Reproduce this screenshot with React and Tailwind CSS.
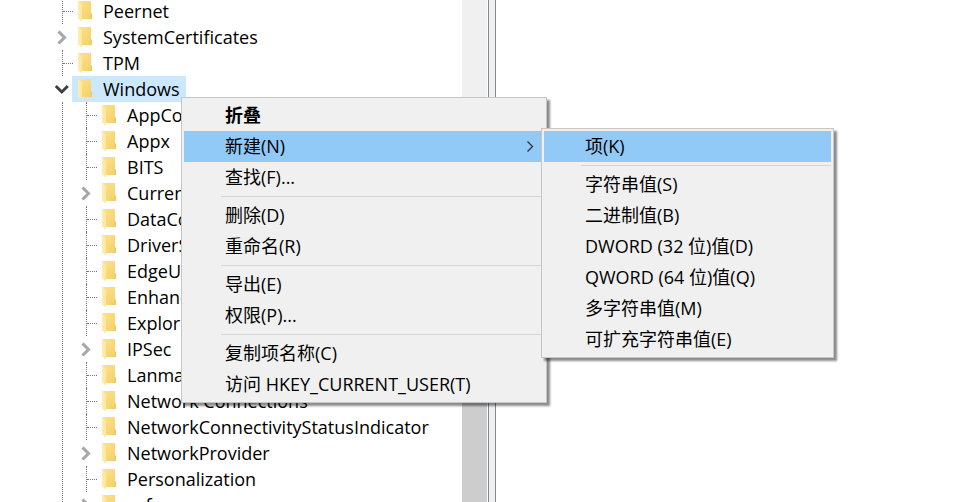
const roots = [
  { name: "Peernet" },
  { name: "SystemCertificates", expandable: true },
  { name: "TPM" },
  {
    name: "Windows",
    expandable: true,
    open: true,
    selected: true,
    children: [
      { name: "AppCompat" },
      { name: "Appx" },
      { name: "BITS" },
      { name: "CurrentVersion", expandable: true },
      { name: "DataCollection" },
      { name: "DriverSearching" },
      { name: "EdgeUI" },
      { name: "EnhancedStorageDevices" },
      { name: "Explorer" },
      { name: "IPSec", expandable: true },
      { name: "LanmanServer" },
      { name: "Network Connections" },
      { name: "NetworkConnectivityStatusIndicator" },
      { name: "NetworkProvider", expandable: true },
      { name: "Personalization" },
      { name: "safer", expandable: true },
    ],
  },
];

const contextItems = [
  { label: "折叠", bold: true },
  { label: "新建(N)", active: true, submenu: true },
  { label: "查找(F)..." },
  null,
  { label: "删除(D)" },
  { label: "重命名(R)" },
  null,
  { label: "导出(E)" },
  { label: "权限(P)..." },
  null,
  { label: "复制项名称(C)" },
  { label: "访问 HKEY_CURRENT_USER(T)" },
];

const newItems = [
  { label: "项(K)", active: true },
  null,
  { label: "字符串值(S)" },
  { label: "二进制值(B)" },
  { label: "DWORD (32 位)值(D)" },
  { label: "QWORD (64 位)值(Q)" },
  { label: "多字符串值(M)" },
  { label: "可扩充字符串值(E)" },
];

function FolderIcon() {
  return (
    <svg viewBox="0 0 16 22" className="h-[22px] w-4 shrink-0" aria-hidden="true">
      <defs>
        <linearGradient id="folderBack" x1="0" y1="0" x2="1" y2="1">
          <stop offset="0" stopColor="#fbe296" />
          <stop offset="0.5" stopColor="#f8d978" />
          <stop offset="1" stopColor="#f3cf6c" />
        </linearGradient>
        <linearGradient id="folderFlap" x1="0" y1="0" x2="1" y2="0">
          <stop offset="0" stopColor="#ffedb0" />
          <stop offset="1" stopColor="#fce49a" />
        </linearGradient>
      </defs>
      <path d="M1 1H14V12.500L15 14V19H4L1 18Z" fill="url(#folderBack)" />
      <path d="M13 14L14 13.500L15 14.500V19H13Z" fill="#f0ca62" />
      <path d="M1 1.300L5 4V16.500L5.500 17.500L5 21.500L1 18.500Z" fill="url(#folderFlap)" />
    </svg>
  );
}

function Toggle({ open }) {
  return (
    <button
      type="button"
      aria-label={open ? "Collapse" : "Expand"}
      className="flex h-[26px] w-4 shrink-0 items-center justify-center"
    >
      {open ? (
        <svg viewBox="0 0 14 14" className="h-3.5 w-3.5 shrink-0" fill="none" stroke="#404040" strokeWidth="3">
          <path d="M0.800 4L6.800 10L12.800 4" />
        </svg>
      ) : (
        <svg viewBox="0 0 14 14" className="h-3.5 w-3.5 shrink-0" fill="none" stroke="#a6a6a6" strokeWidth="3">
          <path d="M3.500 1.500L9.500 7.500L3.500 13.500" />
        </svg>
      )}
    </button>
  );
}

function Branch() {
  return (
    <span className="flex h-[26px] w-4 shrink-0 items-center pl-2">
      <span className="h-full w-px shrink-0 border-l border-dotted border-[#7a7a7a]" />
      <span className="w-[10px] shrink-0 border-t border-dotted border-[#7a7a7a]" />
    </span>
  );
}

function TreeNode({ node }) {
  return (
    <li role="treeitem" aria-expanded={node.expandable ? Boolean(node.open) : undefined}>
      <div className="flex h-[26px] items-center">
        {node.expandable ? <Toggle open={node.open} /> : <Branch />}
        <span
          className={
            node.selected
              ? "ml-0.5 flex h-[26px] items-center gap-[10px] bg-[#cce8ff] pr-1.5 pl-[5px]"
              : "ml-0.5 flex h-[26px] items-center gap-[10px] pr-1.5 pl-[5px]"
          }
        >
          <FolderIcon />
          <span className="whitespace-nowrap">{node.name}</span>
        </span>
      </div>
      {node.children && (
        <ul role="group" className="ml-2 border-l border-dotted border-[#7a7a7a] pl-[15px]">
          {node.children.map((child) => (
            <TreeNode key={child.name} node={child} />
          ))}
        </ul>
      )}
    </li>
  );
}

function Menu({ items, label }) {
  return (
    <div
      role="menu"
      aria-label={label}
      className="border border-[#c6c6c6] bg-[#f0f0f0] p-0.5 shadow-[3px_3px_2px_rgba(0,0,0,0.45)]"
    >
      {items.map((item, i) =>
        item === null ? (
          <div key={i} role="separator" className="ml-[37px] h-[7px] pt-[3px]">
            <div className="h-px bg-[#d4d4d4]" />
          </div>
        ) : (
          <button
            key={i}
            type="button"
            role="menuitem"
            className={
              item.active
                ? "flex h-[31px] w-full items-center justify-between bg-[#91c9f7] pr-2.5 pb-0.5 pl-[41px] text-left"
                : "flex h-[31px] w-full items-center justify-between pr-2.5 pb-0.5 pl-[41px] text-left"
            }
          >
            <span className={item.bold ? "font-bold whitespace-nowrap" : "whitespace-nowrap"}>{item.label}</span>
            {item.submenu && (
              <svg viewBox="0 0 8 12" className="h-3 w-2" fill="none" stroke="#333" strokeWidth="1.3">
                <path d="M1.500 1.500L6.500 6.500L1.500 11.500" />
              </svg>
            )}
          </button>
        ),
      )}
    </div>
  );
}

export default function App() {
  return (
    <main className="relative flex h-screen overflow-hidden bg-white font-['Open_Sans','Noto_Sans_CJK_SC',sans-serif] text-[18px] leading-[26px] text-black">
      <nav className="w-[462px] shrink-0 overflow-hidden">
        <ul role="tree" className="-mt-0.5 pl-[54px]">
          {roots.map((node) => (
            <TreeNode key={node.name} node={node} />
          ))}
        </ul>
      </nav>
      <div className="flex w-[25px] shrink-0 flex-col bg-[#f0f0f0]">
        <div className="h-1/2" />
        <div className="flex-1 bg-[#cdcdcd]" />
      </div>
      <div className="ml-px w-2 shrink-0 border-x border-[#828790] bg-[#f0f0f0]" />
      <section className="min-w-0 flex-1" />

      <div className="absolute top-[97px] left-[181px] w-[366px]">
        <Menu items={contextItems} label="Windows" />
      </div>
      <div className="absolute top-[128px] left-[541px] w-[293px]">
        <Menu items={newItems} label="新建" />
      </div>
    </main>
  );
}
